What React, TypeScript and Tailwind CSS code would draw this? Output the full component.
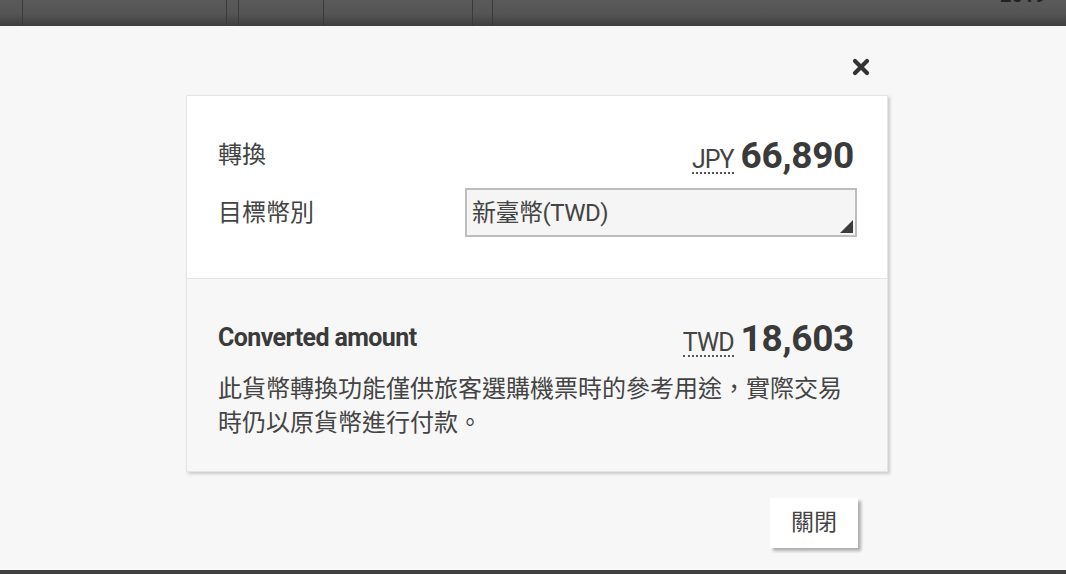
import React from "react";

const barCells = [23, 204, 12, 85, 149, 20];

function CloseIcon() {
  return (
    <svg width="18" height="18" viewBox="0 0 18 18" aria-hidden>
      <path d="M3 3 L15 15 M15 3 L3 15" stroke="#333" strokeWidth="4.2" strokeLinecap="round" />
    </svg>
  );
}

function Amount({ code, value }: { code: string; value: string }) {
  return (
    <div className="flex items-baseline gap-[7px]">
      <span className="text-[25px] leading-none tracking-[-1px] border-b-2 border-dotted border-[#555] text-[#444]">
        {code}
      </span>
      <span className="text-[37px] leading-none font-bold tracking-[-0.3px] text-[#3a3a3a]">{value}</span>
    </div>
  );
}

export default function App() {
  return (
    <div className="w-[1066px] h-[574px] flex flex-col bg-[#f7f7f7] overflow-hidden font-['Roboto','Noto_Sans_CJK_TC',sans-serif] text-[#444]">
      {/* top bar */}
      <div className="h-[26px] flex bg-linear-to-b from-[#5a5a5a] via-[#555555] to-[#3f3f3f] overflow-hidden">
        {barCells.map((w, i) => (
          <div key={i} style={{ width: w }} className="h-full border-r border-[#3a3a3a]" />
        ))}
        <div className="flex-1 h-full relative">
          <span className="absolute left-[507px] -top-[20px] text-[20px] font-bold text-[#222]">2019</span>
        </div>
      </div>

      {/* modal body */}
      <div className="flex-1 ml-[186px] w-[702px] flex flex-col">
        <div className="mt-[32px] h-[18px] flex justify-end pr-[18px]">
          <CloseIcon />
        </div>

        <div className="mt-[19px] bg-white border border-[#e4e4e4] shadow-[2px_2px_3px_rgba(0,0,0,0.18)]">
          <div className="pt-[39px] pb-[41px] pl-[31px] pr-[33px]">
            <div className="h-[40px] flex items-center justify-between">
              <span className="text-[24px]">轉換</span>
              <Amount code="JPY" value="66,890" />
            </div>
            <div className="mt-[13px] h-[49px] flex items-center -mr-[3px]">
              <span className="w-[247px] text-[24px]">目標幣別</span>
              <div className="relative flex-1 h-full flex items-center border-2 border-[#bdbdbd] bg-[#f5f5f5] pl-[5px]">
                <span className="text-[24px] tracking-[-0.5px] text-[#444]">新臺幣(TWD)</span>
                <span className="absolute right-[2px] bottom-[2px] w-0 h-0 border-l-[13px] border-l-transparent border-b-[13px] border-b-[#3c3c3c]" />
              </div>
            </div>
          </div>

          <div className="border-t border-[#e6e6e6] bg-[#f7f7f7] pt-[39px] pb-[31px] pl-[31px] pr-[33px]">
            <div className="h-[40px] flex items-center justify-between">
              <span className="text-[25px] font-bold tracking-[-0.6px] text-[#3a3a3a]">Converted amount</span>
              <Amount code="TWD" value="18,603" />
            </div>
            <p className="mt-[14px] text-[24px] leading-[34px] text-[#444]">
              此貨幣轉換功能僅供旅客選購機票時的參考用途，實際交易時仍以原貨幣進行付款。
            </p>
          </div>
        </div>

        <div className="mt-[26px] flex justify-end pr-[30px]">
          <button className="w-[88px] h-[50px] bg-white text-[23px] text-[#444] shadow-[3px_3px_3px_rgba(0,0,0,0.3)]">
            關閉
          </button>
        </div>
      </div>

      <div className="h-[4px] bg-[#404040]" />
    </div>
  );
}
